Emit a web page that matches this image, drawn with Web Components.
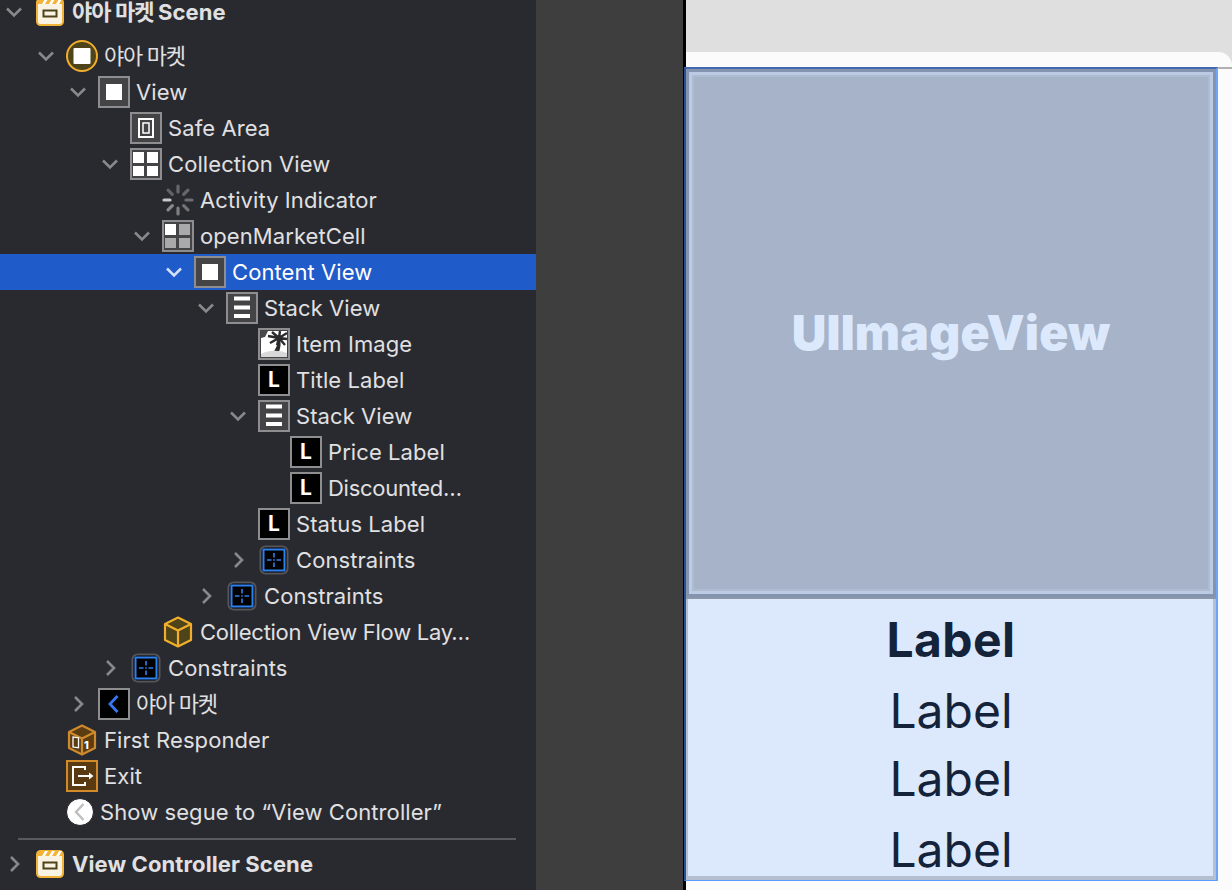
<!DOCTYPE html>
<html lang="ko">
<head>
<meta charset="utf-8">
<title>Storyboard</title>
<style>
 html, body { margin: 0; height: 100%; overflow: hidden; background: #3e3e3e; }
 .ko { letter-spacing: -1.3px; }
 .ko-scene { letter-spacing: -0.9px; }
 .fit { letter-spacing: -0.28px; }
</style>
</head>
<body>
<xc-window>
 <xc-outline slot="outline">
  <xc-row depth="0" icon="scene" open scene><span class="ko-scene">야아 마켓 </span>Scene</xc-row>
  <xc-row depth="1" icon="controller" open><span class="ko">야아 마켓</span></xc-row>
  <xc-row depth="2" icon="view" open>View</xc-row>
  <xc-row depth="3" icon="safe">Safe Area</xc-row>
  <xc-row depth="3" icon="collection" open>Collection View</xc-row>
  <xc-row depth="4" icon="activity">Activity Indicator</xc-row>
  <xc-row depth="4" icon="cell" open>openMarketCell</xc-row>
  <xc-row depth="5" icon="view" open selected>Content View</xc-row>
  <xc-row depth="6" icon="stack" open>Stack View</xc-row>
  <xc-row depth="7" icon="image">Item Image</xc-row>
  <xc-row depth="7" icon="label">Title Label</xc-row>
  <xc-row depth="7" icon="stack" open>Stack View</xc-row>
  <xc-row depth="8" icon="label">Price Label</xc-row>
  <xc-row depth="8" icon="label"><span class="fit">Discounted…</span></xc-row>
  <xc-row depth="7" icon="label">Status Label</xc-row>
  <xc-row depth="7" icon="constraints" closed>Constraints</xc-row>
  <xc-row depth="6" icon="constraints" closed>Constraints</xc-row>
  <xc-row depth="4" icon="cube"><span class="fit">Collection View Flow Lay…</span></xc-row>
  <xc-row depth="3" icon="constraints" closed>Constraints</xc-row>
  <xc-row depth="2" icon="back" closed><span class="ko">야아 마켓</span></xc-row>
  <xc-row depth="1" icon="responder">First Responder</xc-row>
  <xc-row depth="1" icon="exit">Exit</xc-row>
  <xc-row depth="1" icon="segue" tight>Show segue to “View Controller”</xc-row>
  <xc-row depth="0" icon="scene" closed scene divided>View Controller Scene</xc-row>
 </xc-outline>
 <xc-canvas slot="canvas">
  <xc-cell>
   <span slot="image">UIImageView</span>
   <cell-label bold gap="0">Label</cell-label>
   <cell-label gap="3">Label</cell-label>
   <cell-label gap="0">Label</cell-label>
   <cell-label gap="3">Label</cell-label>
  </xc-cell>
 </xc-canvas>
</xc-window>

<script>
// Иконки навигатора: viewBox 32x32
const ICONS = {
 scene: `<svg viewBox="0 0 32 32"><rect x="3" y="3" width="26" height="26" rx="3.5" fill="#f8f3e2" stroke="#f3b338" stroke-width="2"/>
  <path d="M3 8V6.5A3.5 3.5 0 0 1 6.5 3H25.500A3.500 3.500 0 0 1 29 6.500V8Z" fill="#f3b338"/>
  <path d="M8 8l3-5h3l-3 5ZM15 8l3-5h3l-3 5ZM22 8l3-5h3l-3 5Z" fill="#fff"/>
  <rect x="9.500" y="14.500" width="13" height="6" fill="none" stroke="#4f431a" stroke-width="2"/></svg>`,
 controller: `<svg viewBox="0 0 32 32"><circle cx="16" cy="16" r="15" fill="#4f431a" stroke="#f1ae2c" stroke-width="2"/><rect x="7.500" y="8" width="17" height="16" rx="1" fill="#fff"/></svg>`,
 view: `<svg viewBox="0 0 32 32"><rect x="8" y="8" width="16" height="16" fill="#fff"/></svg>`,
 safe: `<svg viewBox="0 0 32 32"><rect x="9" y="7" width="14" height="18" fill="none" stroke="#fff" stroke-width="2"/><rect x="13" y="11" width="6" height="10" fill="none" stroke="#fff" stroke-width="1.500"/></svg>`,
 collection: `<svg viewBox="0 0 32 32"><path fill="#fff" d="M3 4h11v11H3zM17 4h11v11H17zM3 18h11v10H3zM17 18h11v10H17z"/></svg>`,
 cell: `<svg viewBox="0 0 32 32"><path fill="#a9a9a9" d="M17 4h11v11H17zM3 18h11v10H3zM17 18h11v10H17z"/><path fill="#fff" d="M3 4h11v11H3z"/></svg>`,
 stack: `<svg viewBox="0 0 32 32"><path fill="#fff" d="M8 4.500h16v4H8zM8 13.500h16v4H8zM8 22h16v4H8z"/></svg>`,
 image: `<svg viewBox="0 0 32 32"><path fill="#fff" d="M3 3h26v26H3z"/><path fill="#4a4a4c" d="M3 3h7l-3 6-4 1Z"/>
  <path stroke="#2b2b2d" stroke-width="2.400" fill="none" d="M21 10 29 5M21 10 29 11M21 10 27 17M21 10 22 3M21 10 14 4M21 10 10 8M21 10 12 15M21 10 19 17"/>
  <path d="M20 10C20 16 18 21 14 26L20 26C23 20 23 15 22 10Z" fill="#2b2b2d"/><path d="M3 26C11 22 21 22 29 25V29H3Z" fill="#d8d8d8"/></svg>`,
 activity: `<svg viewBox="0 0 32 32" stroke-width="3.200" stroke-linecap="round" stroke="#9a9a9c"><path d="M16 2v6" opacity=".55"/><path d="M25.900 6.100l-4.200 4.200" opacity=".55"/><path d="M30 16h-6" opacity=".6"/><path d="M25.900 25.900l-4.200-4.200" opacity=".65"/><path d="M16 30v-6" opacity=".75"/><path d="M6.100 25.900l4.200-4.200" opacity=".85"/><path d="M2 16h6" stroke="#c8c8ca"/><path d="M6.100 6.100l4.200 4.200" opacity=".5"/></svg>`,
 constraints: `<svg viewBox="0 0 32 32"><rect x="2.500" y="2.500" width="27" height="27" rx="5" fill="#000" stroke="#55555a" stroke-width="2"/><rect x="5.500" y="5.500" width="21" height="21" fill="none" stroke="#2f80ed" stroke-width="2"/>
  <path d="M16 9v4.500M16 18.500V23M9 16h4.500M18.500 16H23M15.200 16h1.600" stroke="#2f80ed" stroke-width="1.600"/></svg>`,
 back: `<svg viewBox="0 0 32 32"><path d="M19.500 8 12 16l7.500 8" fill="none" stroke="#3478f0" stroke-width="2.800"/></svg>`,
 cube: `<svg viewBox="0 0 32 32"><path d="M16 1.500 29 8v16l-13 6.500L3 24V8Z" fill="#4f431a" stroke="#f1ae2c" stroke-width="2.200" stroke-linejoin="round"/><path d="M3 8l13 6.500L29 8M16 14.500v16" fill="none" stroke="#f1ae2c" stroke-width="2.200"/></svg>`,
 responder: `<svg viewBox="0 0 32 32"><path d="M16 1.500 29 8v16l-13 6.500L3 24V8Z" fill="#5c3d12" stroke="#cd8a2e" stroke-width="2.200" stroke-linejoin="round"/><path d="M3 8l13 6.500L29 8M16 14.500v16" fill="none" stroke="#cd8a2e" stroke-width="2.200"/>
  <rect x="7" y="12" width="5.500" height="10" fill="none" stroke="#fff" stroke-width="1.300" transform="skewY(8)"/><text x="18" y="25" font-family="Inter, sans-serif" font-size="11" font-weight="800" fill="#fff">1</text></svg>`,
 exit: `<svg viewBox="0 0 32 32"><rect x="1" y="1" width="30" height="30" fill="#5a3a10" stroke="#d28a2a" stroke-width="2"/><path d="M19 10V7H7v18h12v-3" fill="none" stroke="#fff" stroke-width="2"/><path d="M12 16h13" stroke="#fff" stroke-width="2"/><path d="M23 12.500 27.500 16 23 19.500Z" fill="#fff"/></svg>`,
 segue: `<svg viewBox="0 0 32 32"><circle cx="14" cy="16" r="13.500" fill="#fff" stroke="#1c1c1f" stroke-width="1"/><path d="M17.500 8 10 16l7.500 8" fill="none" stroke="#bdbdbd" stroke-width="2.400"/></svg>`,
 label: `<b>L</b>`
};
const BOXED = ['view', 'safe', 'collection', 'cell', 'stack', 'image', 'label', 'back'];

// Значок строки
class XcIcon extends HTMLElement {
 connectedCallback() {
  const name = this.getAttribute('name');
  const boxed = BOXED.includes(name);
  const black = name === 'label' || name === 'back';
  this.attachShadow({ mode: 'open' }).innerHTML = `
   <style>
    :host { display: flex; width: 32px; height: 32px; flex: none; box-sizing: border-box;
     align-items: center; justify-content: center;
     background: ${boxed ? (black ? '#000' : '#444446') : 'none'};
     ${boxed ? 'outline: 2px solid #8e8e90; outline-offset: -2px;' : ''} }
    svg { display: block; width: 32px; height: 32px; }
    b { font: 700 21px/32px Inter, sans-serif; color: #fff; }
   </style>${ICONS[name]}`;
 }
}
customElements.define('xc-icon', XcIcon);

// Строка дерева: depth задаёт отступ, open/closed — стрелку
class XcRow extends HTMLElement {
 connectedCallback() {
  const depth = Number(this.getAttribute('depth'));
  const icon = this.getAttribute('icon');
  let arrow = '';
  if (this.hasAttribute('open')) arrow = '<path d="M1 4.500 8 11.500l7-7"/>';
  if (this.hasAttribute('closed')) arrow = '<path d="M5 1 12 8l-7 7" />';
  this.attachShadow({ mode: 'open' }).innerHTML = `
   <style>
    :host { display: flex; align-items: center; height: 36px; box-sizing: border-box;
     padding-left: ${2 + 32 * depth}px; white-space: nowrap;
     font: 22px/36px Inter, "Noto Sans CJK KR", sans-serif; letter-spacing: 0.08px; color: #e0e0e2; }
    :host([scene]) { font-weight: 700; letter-spacing: 0.1px; }
    :host([selected]) { background: #1f5bc9; color: #fff; }
    .arrow { width: 32px; flex: none; display: flex; justify-content: center; }
    .arrow svg { width: 16px; height: 16px; fill: none; stroke: ${this.hasAttribute('selected') ? '#d3e0f8' : '#88888b'}; stroke-width: 2.600; transform: translateX(-4px); }
    .name { margin-left: 6px; }
    :host([tight]) .name { margin-left: 2px; }
   </style>
   <span class="arrow"><svg viewBox="0 0 16 16">${arrow}</svg></span>
   <xc-icon name="${icon}"></xc-icon>
   <span class="name"><slot></slot></span>`;
 }
}
customElements.define('xc-row', XcRow);

// Левая колонка с деревом
class XcOutline extends HTMLElement {
 constructor() {
  super();
  this.attachShadow({ mode: 'open' }).innerHTML = `
   <style>
    :host { display: flex; flex-direction: column; width: 536px; height: 890px; flex: none;
     overflow: hidden; background: #292a2f; }
    .inner { margin-top: -6px; }
    ::slotted(xc-row:first-child) { margin-bottom: 8px; }
    ::slotted(xc-row[divided]) { margin-top: 7px; }
    ::slotted(xc-row[tight]) { margin-bottom: 9px; }
    .list { display: flex; flex-direction: column; position: relative; }
    .rule { position: absolute; left: 18px; width: 498px; top: 844px; height: 2px; background: #5a5a5e; }
   </style>
   <div class="inner"><div class="list"><slot></slot><div class="rule"></div></div></div>`;
 }
}
customElements.define('xc-outline', XcOutline);

// Одна надпись в ячейке
class CellLabel extends HTMLElement {
 connectedCallback() {
  this.attachShadow({ mode: 'open' }).innerHTML = `
   <style>
    :host { display: block; height: 68px; margin-top: ${this.getAttribute('gap')}px; text-align: center;
     font: 400 48px/68px Inter, sans-serif; color: #14233a; }
    :host([bold]) { font-weight: 700; letter-spacing: 0.4px; }
   </style><slot></slot>`;
 }
}
customElements.define('cell-label', CellLabel);

// Ячейка: картинка сверху, стек надписей снизу
class XcCell extends HTMLElement {
 constructor() {
  super();
  this.attachShadow({ mode: 'open' }).innerHTML = `
   <style>
    :host { display: flex; flex-direction: column; width: 534px; height: 814px; flex: none; box-sizing: border-box;
     margin-left: -2px; border-style: solid; border-width: 2px 2px 1px 2px; border-color: #4468ad #6ea5fa #5b9afc #27508f;
     background: #dce9fd; position: relative; }
    .image { height: 530px; flex: none; box-sizing: border-box; display: flex; align-items: center; justify-content: center;
     background: #a6b3c8; border-bottom: 2px solid #8c97aa;
     box-shadow: inset 0 0 0 3px #8493ae, inset 0 0 0 6px #bccbe3, inset 0 0 0 8px #aebcd2; }
    .image ::slotted(span) { font: 900 48px/1 Inter, sans-serif; color: #dce9fd; letter-spacing: 0.2px; }
    .labels { flex: 1; min-height: 0; overflow: hidden; box-sizing: border-box; padding-top: 7px;
     box-shadow: inset 2px 0 0 #b4c0d2, inset -3px 0 0 #b5c1d3, inset 0 -4px 0 #b4bfd0; }
   </style>
   <div class="image"><slot name="image"></slot></div>
   <div class="labels"><slot></slot></div>`;
 }
}
customElements.define('xc-cell', XcCell);

// Правая часть: серый верх и белый лист со скруглённым углом
class XcCanvas extends HTMLElement {
 constructor() {
  super();
  this.attachShadow({ mode: 'open' }).innerHTML = `
   <style>
    :host { display: flex; flex-direction: column; flex: 1; min-width: 0; height: 890px;
     background: #dfdfdf; border-left: 3px solid #000; box-sizing: border-box; }
    .sheet { margin-top: 52px; flex: 1; background: #fbfbfb; border-top-right-radius: 14px; display: flex; flex-direction: column; }
    .band { height: 15px; flex: none; margin-bottom: -2px; border-bottom: 2px solid #b0b0b0; }
   </style>
   <div class="sheet"><div class="band"></div><slot></slot></div>`;
 }
}
customElements.define('xc-canvas', XcCanvas);

// Окно: дерево, серая полоса, холст
class XcWindow extends HTMLElement {
 constructor() {
  super();
  this.attachShadow({ mode: 'open' }).innerHTML = `
   <style>
    :host { display: flex; width: 1232px; height: 890px; background: #3e3e3e; }
    .gutter { width: 147px; flex: none; }
   </style>
   <slot name="outline"></slot><div class="gutter"></div><slot name="canvas"></slot>`;
 }
}
customElements.define('xc-window', XcWindow);
</script>
</body>
</html>
